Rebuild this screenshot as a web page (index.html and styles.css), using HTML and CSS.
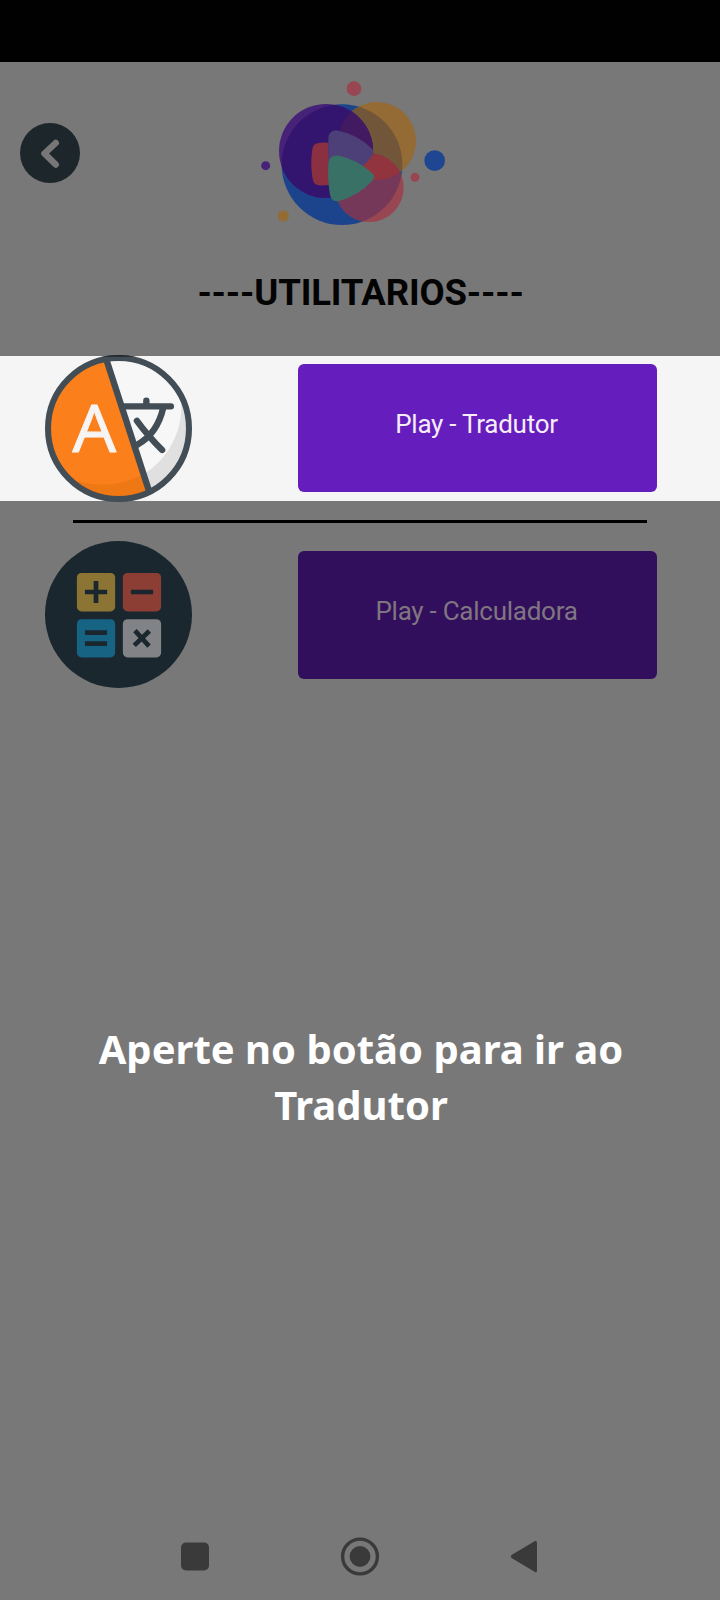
FILE: index.html
```html
<!DOCTYPE html>
<html lang="pt">
<head>
<meta charset="utf-8">
<title>Utilitarios</title>
<link rel="stylesheet" href="styles.css">
</head>
<body>
<div class="screen">
  <div class="status"></div>
  <header class="header">
    <svg class="back" viewBox="0 0 60 60"><circle cx="30" cy="30" r="30" fill="#1d272b"/><path d="M35.7 20 24.5 30.500 35.7 41.500" fill="none" stroke="#777" stroke-width="6.5" stroke-linecap="round" stroke-linejoin="round"/></svg>
    <svg class="logo" viewBox="0 0 660 540">
      <defs>
        <clipPath id="blue"><circle cx="306" cy="314" r="181"/></clipPath>
        <clipPath id="purple"><circle cx="258" cy="273" r="141"/></clipPath>
        <clipPath id="orange"><circle cx="411" cy="243" r="117"/></clipPath>
      </defs>
      <circle cx="306" cy="314" r="181" fill="#1c448c"/>
      <circle cx="411" cy="243" r="117" fill="#946b34"/>
      <circle cx="411" cy="243" r="117" fill="#715639" clip-path="url(#blue)"/>
      <circle cx="258" cy="273" r="141" fill="#462379"/>
      <circle cx="258" cy="273" r="141" fill="#33156f" clip-path="url(#blue)"/>
      <g clip-path="url(#purple)"><circle cx="411" cy="243" r="117" fill="#421a61"/></g>
      <circle cx="388" cy="383" r="103" fill="#984651"/>
      <circle cx="388" cy="383" r="103" fill="#753859" clip-path="url(#blue)"/>
      <circle cx="388" cy="383" r="103" fill="#92343d" clip-path="url(#orange)"/>
      <path d="M265 248Q245 247 231 250Q220 252 217 268Q210 312 218 357Q221 374 237 376Q250 377 270 374Z" fill="#8b3041"/>
      <path d="M265 325V235Q267 211 289 211Q350 222 397 267Q404 276 397 286Q385 306 364 322Z" fill="#4d4078"/>
      <path d="M265 310Q268 283 297 287Q355 299 398 341Q407 350 397 362Q355 407 297 423Q275 427 270 404Q262 360 265 310Z" fill="#3a7166"/>
      <circle cx="342" cy="86" r="22" fill="#984651"/>
      <circle cx="584" cy="302" r="31" fill="#1f4791"/>
      <circle cx="525" cy="352" r="13.5" fill="#984651"/>
      <circle cx="77" cy="317" r="13.5" fill="#462379"/>
      <circle cx="130" cy="468" r="16.5" fill="#946b34"/>
    </svg>
    <h1 class="title">----UTILITARIOS----</h1>
  </header>
  <main class="list">
    <div class="row lit">
      <svg class="icon" viewBox="0 0 438 438">
        <defs>
          <clipPath id="disc"><circle cx="219" cy="219" r="212"/></clipPath>
          <clipPath id="left"><path d="M0 0H180L310 410V438H0Z"/></clipPath>
          <clipPath id="top"><path d="M0 0H438V5H0Z"/></clipPath>
        </defs>
        <g clip-path="url(#disc)">
          <rect width="438" height="438" fill="#e0e0e1"/>
          <circle cx="170" cy="154" r="236" fill="#f7f7f8"/>
          <g clip-path="url(#left)"><rect width="438" height="438" fill="#ee7814"/><circle cx="170" cy="128" r="258" fill="#fb801c"/></g>
        </g>
        <path d="M183 14 310 405" stroke="#424d55" stroke-width="19"/>
        <path d="M237 153H375M302 136V151M352 158Q335 234 274 268M274 196Q306 240 349 283" fill="none" stroke="#424d55" stroke-width="19" stroke-linecap="round"/>
        <text class="letter" x="147" y="289" textLength="130" lengthAdjust="spacingAndGlyphs">A</text>
        <circle cx="219" cy="219" r="210" fill="none" stroke="#424d55" stroke-width="18"/>
        <g clip-path="url(#top)"><circle cx="219" cy="219" r="210" fill="none" stroke="#20262a" stroke-width="18"/></g>
      </svg>
      <div class="button">Play - Tradutor</div>
    </div>
    <div class="divider"></div>
    <div class="row">
      <svg class="icon" viewBox="0 0 438 438">
        <circle cx="219" cy="219" r="219" fill="#1a272e"/>
        <rect x="95" y="95" width="114" height="115" rx="14" fill="#8c7534"/>
        <rect x="232" y="95" width="114" height="115" rx="14" fill="#8c3d34"/>
        <rect x="95" y="233" width="114" height="114" rx="14" fill="#176384"/>
        <rect x="232" y="233" width="114" height="114" rx="14" fill="#828387"/>
        <path d="M119 152H185M152 119V185M256 152H322M119 273H185M119 306H185M268 267 310 313M311 268 266 311" stroke="#1a272e" stroke-width="14"/>
      </svg>
      <div class="button calc">Play - Calculadora</div>
    </div>
  </main>
  <p class="hint">Aperte no botão para ir ao<br>Tradutor</p>
  <nav class="nav">
    <svg viewBox="0 0 40 40"><rect x="6" y="5.500" width="28" height="28" rx="5"/></svg>
    <svg viewBox="0 0 40 40"><circle cx="20" cy="19.500" r="17.4" fill="none" stroke="#3a3a3a" stroke-width="3.4"/><circle cx="20" cy="19.500" r="10.4"/></svg>
    <svg viewBox="0 0 40 40"><path d="M6.500 18 30 4Q32 3.500 32 5.500V33.500Q32 36 30 35L6.500 21Q5 19.500 6.500 18Z"/></svg>
  </nav>
</div>
</body>
</html>
```
FILE: styles.css
```css
* { box-sizing: border-box; }
body { margin: 0; }
.screen {
  width: 720px;
  height: 1600px;
  display: flex;
  flex-direction: column;
  background: #787878;
  font-family: Roboto, sans-serif;
}
.status { height: 62px; background: #010101; }
.header {
  height: 294px;
  display: grid;
  grid-template-columns: 240px 220px 240px;
  grid-template-rows: 180px 1fr;
}
.back { width: 60px; height: 60px; margin: 61px 0 0 20px; }
.logo { width: 220px; height: 180px; margin-top: -2px; }
.title {
  grid-column: 1 / -1;
  width: 720px;
  margin: 29px 0 0;
  padding-left: 1px;
  text-align: center;
  font-size: 36.5px;
  line-height: 44px;
  font-weight: 700;
  letter-spacing: -.16px;
  color: #030303;
}
.list { display: flex; flex-direction: column; }
.row {
  height: 145px;
  padding-left: 45px;
  display: flex;
  align-items: center;
  gap: 106px;
}
.lit { background: #f5f5f5; }
.icon { width: 147px; height: 147px; flex: none; }
.lit .icon { margin-top: -1px; }
.letter {
  font-family: "Open Sans", sans-serif;
  font-size: 194px;
  fill: #f7f5f3;
  stroke: #f7f5f3;
  stroke-width: 3;
  stroke-linejoin: round;
  text-anchor: middle;
}
.button {
  width: 359px;
  height: 128px;
  padding: 45px 2px 0 0;
  border-radius: 6px;
  background: #651dbd;
  color: #f6edf8;
  text-align: center;
  font-size: 26px;
  line-height: 31px;
  letter-spacing: -.26px;
}
.lit .button { margin-top: -1px; }
.calc { background: #310f5c; color: #807681; }
.divider { width: 574px; height: 3px; margin: 19px 0 19px 73px; background: #000; }
.hint {
  margin: 334px 0 0;
  padding-left: 2px;
  text-align: center;
  font: 700 40px/56px "Noto Sans", sans-serif;
  color: #fff;
}
.nav {
  margin-top: auto;
  padding: 0 175px 23px;
  display: flex;
  justify-content: space-between;
}
.nav svg { width: 40px; height: 40px; fill: #3a3a3a; }
```
